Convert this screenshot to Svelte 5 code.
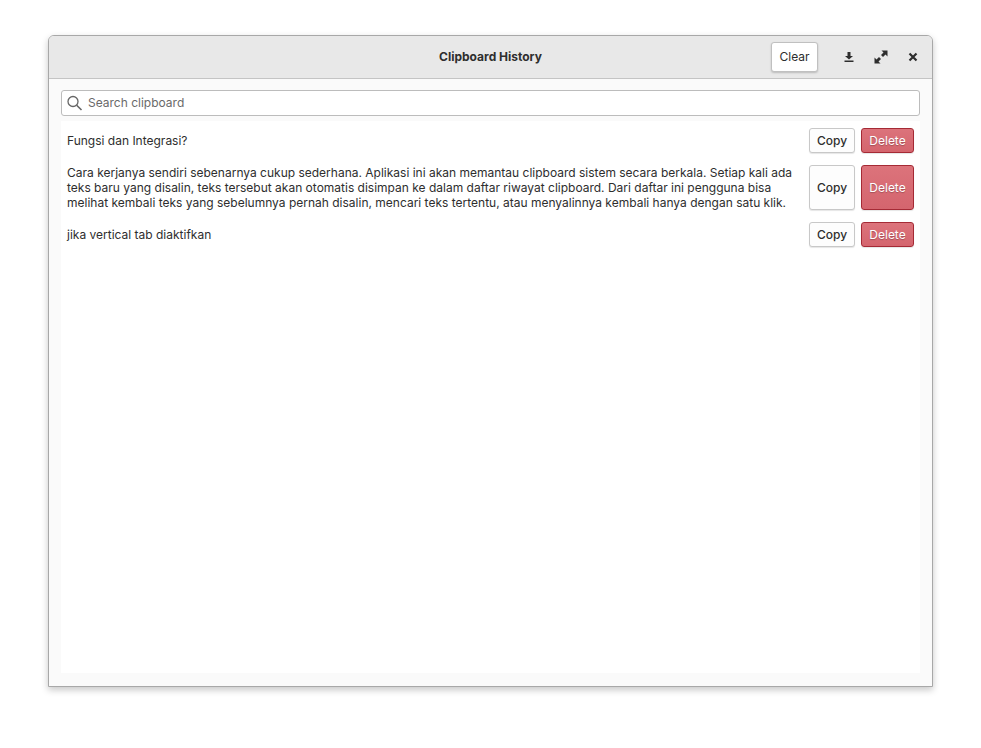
<script>
  const items = [
    'Fungsi dan Integrasi?',
    'Cara kerjanya sendiri sebenarnya cukup sederhana. Aplikasi ini akan memantau clipboard sistem secara berkala. Setiap kali ada teks baru yang disalin, teks tersebut akan otomatis disimpan ke dalam daftar riwayat clipboard. Dari daftar ini pengguna bisa melihat kembali teks yang sebelumnya pernah disalin, mencari teks tertentu, atau menyalinnya kembali hanya dengan satu klik.',
    'jika vertical tab diaktifkan'
  ];
</script>

<div class="page">
  <div class="window">
    <header class="titlebar">
      <div class="title">Clipboard History</div>
      <div class="actions">
        <button class="clear">Clear</button>
        <div class="wm">
          <svg class="down" width="12" height="12" viewBox="0 0 12 12"><path d="M4.500 1h3v4H10L6 8.600 2 5h2.500zM1.500 9.500h9V11h-9z" fill="#2e2e2e"/></svg>
          <svg class="expand" width="14" height="14" viewBox="0 0 14 14"><path d="M7.500 0.500H13.500V6.500l-2-2L9 7 7 5l2.500-2.500zM7 9l-2.500 2.500 2 2H0.500V7.500l2 2L5 7z" fill="#2e2e2e"/></svg>
          <svg width="12" height="12" viewBox="0 0 12 12"><path d="M2.500 2.500l7 7M9.500 2.500l-7 7" stroke="#2e2e2e" stroke-width="2.200" fill="none"/></svg>
        </div>
      </div>
    </header>
    <div class="content">
      <label class="search">
        <svg width="16" height="16" viewBox="0 0 16 16"><circle cx="6" cy="6.500" r="5" fill="none" stroke="#666" stroke-width="1.300"/><path d="M9.700 10.200L14.500 15" stroke="#666" stroke-width="1.600"/></svg>
        <input placeholder="Search clipboard" />
      </label>
      <div class="list">
        {#each items as text}
          <div class="row">
            <div class="text">{text}</div>
            <button class="copy">Copy</button>
            <button class="delete">Delete</button>
          </div>
        {/each}
      </div>
    </div>
  </div>
</div>

<style>
  :global(body) {
    margin: 0;
    background: #fff;
  }

  .page {
    width: 981px;
    height: 748px;
    padding: 35px 48px 0;
    box-sizing: border-box;
    font-family: Inter, "Noto Sans", sans-serif;
    font-size: 12px;
    color: #2e2e2e;
  }

  .window {
    width: 885px;
    height: 652px;
    box-sizing: border-box;
    display: flex;
    flex-direction: column;
    background: #fafafa;
    border: 1px solid #a8a8a8;
    border-radius: 6px 6px 0 0;
    box-shadow: 0 3px 7px rgba(0, 0, 0, 0.22);
  }

  .titlebar {
    position: relative;
    height: 43px;
    flex: none;
    box-sizing: border-box;
    display: flex;
    align-items: center;
    justify-content: center;
    background: #e8e8e8;
    border-bottom: 1px solid #c4c4c4;
    border-radius: 5px 5px 0 0;
  }

  .title {
    font-weight: 700;
    padding-bottom: 2px;
  }

  .actions {
    position: absolute;
    right: 0;
    top: 6px;
    display: flex;
    align-items: center;
  }

  .wm {
    display: flex;
    align-items: center;
    gap: 18px;
    margin: 0 13px 0 25px;
  }

  .down {
    margin-right: 1px;
  }

  .expand {
    margin-right: 1px;
  }

  button {
    font: inherit;
    color: #2e2e2e;
    padding: 0;
    box-sizing: border-box;
    border-radius: 3px;
  }

  .clear {
    width: 47px;
    height: 30px;
    padding-bottom: 2px;
    background: #fff;
    border: 1px solid #c0c0c0;
    box-shadow: 0 1px 2px rgba(0, 0, 0, 0.2);
  }

  .content {
    flex: 1;
    min-height: 0;
    display: flex;
    flex-direction: column;
    padding: 11px 12px 13px;
  }

  .search {
    height: 26px;
    flex: none;
    box-sizing: border-box;
    display: flex;
    align-items: center;
    gap: 5px;
    padding: 0 5px;
    background: #fff;
    border: 1px solid #bcbcbc;
    border-radius: 3px;
  }

  .search input {
    flex: 1;
    border: 0;
    outline: 0;
    padding: 0 0 2px;
    background: transparent;
    font: inherit;
  }

  .search input::placeholder {
    color: #6a6a6a;
    opacity: 1;
  }

  .list {
    flex: 1;
    margin-top: 5px;
    padding: 7px 6px 0;
    background: #fff;
    display: flex;
    flex-direction: column;
    gap: 12px;
  }

  .row {
    display: flex;
    align-items: stretch;
    gap: 6px;
  }

  .text {
    flex: 1;
    align-self: center;
    line-height: 15px;
    margin-right: 5px;
  }

  .copy {
    width: 46px;
    min-height: 25px;
    background: #fdfdfd;
    border: 1px solid #c8c8c8;
    box-shadow: 0 1px 1px rgba(0, 0, 0, 0.1);
    font-weight: 500;
  }

  .delete {
    width: 53px;
    min-height: 25px;
    color: #fff;
    background: linear-gradient(#dc737b, #d4656e);
    border: 1px solid #a52a35;
    box-shadow: 0 1px 1px rgba(0, 0, 0, 0.1);
    text-shadow: 0 1px 1px rgba(0, 0, 0, 0.25);
  }
</style>
